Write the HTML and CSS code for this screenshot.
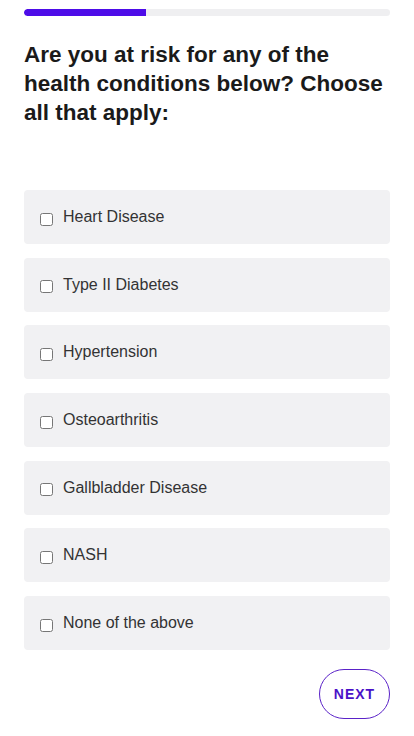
FILE: index.html
```html
<!DOCTYPE html>
<html>
<head>
<meta charset="utf-8">
<link rel="stylesheet" href="styles.css">
</head>
<body>
<div class="page">
  <div class="progress"><div class="progress-fill"></div></div>
  <h1 class="question">Are you at risk for any of the health conditions below? Choose all that apply:</h1>
  <div class="options">
    <label class="option"><input type="checkbox" class="check"><span class="label">Heart Disease</span></label>
    <label class="option"><input type="checkbox" class="check"><span class="label">Type II Diabetes</span></label>
    <label class="option"><input type="checkbox" class="check"><span class="label">Hypertension</span></label>
    <label class="option"><input type="checkbox" class="check"><span class="label">Osteoarthritis</span></label>
    <label class="option"><input type="checkbox" class="check"><span class="label">Gallbladder Disease</span></label>
    <label class="option"><input type="checkbox" class="check"><span class="label">NASH</span></label>
    <label class="option"><input type="checkbox" class="check"><span class="label">None of the above</span></label>
  </div>
  <div class="actions">
    <button class="next">NEXT</button>
  </div>
</div>
</body>
</html>
```
FILE: styles.css
```css
* { box-sizing: border-box; }
html, body { margin: 0; padding: 0; background: #fff; }
body { font-family: "Liberation Sans", Arial, sans-serif; color: #222; }
.page { padding: 9px 24px 0 24px; display: flex; flex-direction: column; }
.progress { height: 7px; background: #efeff1; border-radius: 4px; overflow: hidden; }
.progress-fill { width: 122px; height: 100%; background: #4d0ce8; border-radius: 4px 0 0 4px; }
.question {
  margin: 24px 0 0 0;
  font-size: 22.5px;
  line-height: 29px;
  font-weight: 700;
  color: #1a1a1a;
}
.options { margin-top: 63px; display: flex; flex-direction: column; gap: 13.7px; }
.option {
  display: flex; align-items: center;
  height: 54px;
  padding: 0 0 0 16px;
  background: #f1f1f3;
  border-radius: 4px;
}
.check { width: 13px; height: 13px; margin: 4px 10px 0 0; }
.label { font-size: 16px; color: #333; }
.actions { display: flex; justify-content: flex-end; margin-top: 19px; }
.next {
  width: 71px; height: 50px;
  border: 1.5px solid #5a22c8;
  border-radius: 25px;
  background: #fff;
  color: #4a12c8;
  font-family: "Liberation Sans", Arial, sans-serif;
  font-weight: 700;
  font-size: 14px;
  letter-spacing: 1px;
  padding: 0;
}
```
